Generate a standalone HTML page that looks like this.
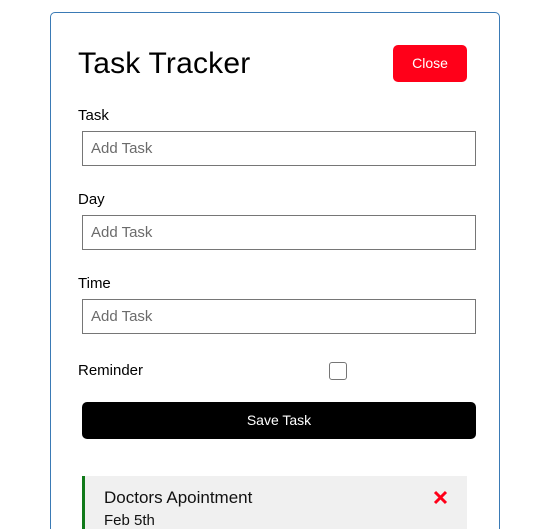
<!DOCTYPE html>
<html style="overflow:hidden;height:529px"><head><style>
body{margin:0;width:543px;height:529px;overflow:hidden;background:#fff;font-family:"Liberation Sans",sans-serif;position:relative}
.box{position:absolute;left:50px;top:12px;width:448px;height:540px;border:1px solid #3a7ab5;border-radius:5px}
.a{position:absolute}
h1{position:absolute;left:78px;top:45px;margin:0;font-size:30px;font-weight:normal;color:#000;line-height:38px;letter-spacing:0.2px}
.close{left:393px;top:45px;width:74px;height:37px;background:#ff0019;border-radius:5px;color:#fff;font-size:14px;line-height:37px;text-align:center}
.lbl{left:78px;font-size:15px;color:#000}
.inp{left:82px;border:1px solid #767676;font-size:15px;color:#6b6b6b;line-height:33px;padding-left:8px;box-sizing:border-box;width:394px;height:35px}
.cb{left:329px;top:362px;width:16px;height:16px;border:1px solid #767676;border-radius:3px}
.save{left:82px;top:402px;width:394px;height:37px;background:#000;border-radius:5px;color:#fff;font-size:14px;line-height:37px;text-align:center}
.task{left:82px;top:476px;width:385px;height:60px;background:#f0f0f0;border-left:3px solid #117a1a;box-sizing:border-box}
</style></head><body>
<div class="box"></div>
<h1>Task Tracker</h1>
<div class="a close">Close</div>
<div class="a lbl" style="top:107px">Task</div>
<div class="a inp" style="top:131px">Add Task</div>
<div class="a lbl" style="top:191px">Day</div>
<div class="a inp" style="top:215px">Add Task</div>
<div class="a lbl" style="top:275px">Time</div>
<div class="a inp" style="top:299px">Add Task</div>
<div class="a lbl" style="top:362px">Reminder</div>
<div class="a cb"></div>
<div class="a save">Save Task</div>
<div class="a task"></div>
<div class="a" style="left:104px;top:488px;font-size:17px;color:#111">Doctors Apointment</div>
<div class="a" style="left:104px;top:512px;font-size:15px;color:#111">Feb 5th</div>
<svg class="a" style="left:433px;top:490px" width="15" height="15" viewBox="0 0 15 15"><path d="M2 2L13 13M13 2L2 13" stroke="#ff0019" stroke-width="3"/></svg>
</body></html>
